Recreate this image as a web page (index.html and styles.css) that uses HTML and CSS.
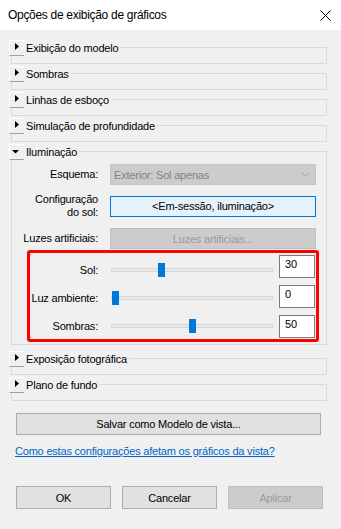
FILE: index.html
```html
<!DOCTYPE html>
<html lang="pt">
<head>
  <meta charset="UTF-8" />
  <title>Opções de exibição de gráficos</title>
  <link rel="stylesheet" href="styles.css">
</head>
<body>

  <div class="dialog">
    <div class="titlebar">
      <span>Opções de exibição de gráficos</span>
      <svg class="close" width="11" height="11" viewBox="0 0 11 11">
        <path d="M0.5 0.5 L10.5 10.5 M10.5 0.5 L0.5 10.5" stroke="#000" stroke-width="1" fill="none" />
      </svg>
    </div>

    <div class="content">
      <div class="group collapsed">
        <div class="group-head">
          <span class="toggle"><svg width="14" height="14"><polygon points="5,2 9,5.5 5,9" /></svg></span>
          <span>Exibição do modelo</span>
        </div>
      </div>

      <div class="group collapsed">
        <div class="group-head">
          <span class="toggle"><svg width="14" height="14"><polygon points="5,2 9,5.5 5,9" /></svg></span>
          <span>Sombras</span>
        </div>
      </div>

      <div class="group collapsed">
        <div class="group-head">
          <span class="toggle"><svg width="14" height="14"><polygon points="5,2 9,5.5 5,9" /></svg></span>
          <span>Linhas de esboço</span>
        </div>
      </div>

      <div class="group collapsed">
        <div class="group-head">
          <span class="toggle"><svg width="14" height="14"><polygon points="5,2 9,5.5 5,9" /></svg></span>
          <span>Simulação de profundidade</span>
        </div>
      </div>

      <div class="group open">
        <div class="group-head">
          <span class="toggle"><svg width="14" height="14"><polygon points="2,5 9,5 5.5,8.5" /></svg></span>
          <span>Iluminação</span>
        </div>

        <div class="row first">
          <label>Esquema:</label>
          <div class="select">
            <span>Exterior: Sol apenas</span>
            <svg width="9" height="5" viewBox="0 0 9 5"><path d="M0.5 0.5 L4.5 4.5 L8.5 0.5" stroke="#a6a6a6" fill="none" /></svg>
          </div>
        </div>

        <div class="row sun">
          <label>Configuração<br>do sol:</label>
          <button class="sun-btn">&lt;Em-sessão, iluminação&gt;</button>
        </div>

        <div class="row lights">
          <label>Luzes artificiais:</label>
          <button class="wide-btn" disabled>Luzes artificiais...</button>
        </div>

        <div class="highlight">
          <div class="sliders">
            <div class="slider-row">
              <label>Sol:</label>
              <input type="range" min="0" max="100" value="30">
            </div>
            <div class="slider-row">
              <label>Luz ambiente:</label>
              <input type="range" min="0" max="100" value="0">
            </div>
            <div class="slider-row">
              <label>Sombras:</label>
              <input type="range" min="0" max="100" value="50">
            </div>
          </div>
          <div class="values">
            <input class="num" type="text" value="30">
            <input class="num" type="text" value="0">
            <input class="num" type="text" value="50">
          </div>
        </div>
      </div>

      <div class="group collapsed">
        <div class="group-head">
          <span class="toggle"><svg width="14" height="14"><polygon points="5,2 9,5.5 5,9" /></svg></span>
          <span>Exposição fotográfica</span>
        </div>
      </div>

      <div class="group collapsed">
        <div class="group-head">
          <span class="toggle"><svg width="14" height="14"><polygon points="5,2 9,5.5 5,9" /></svg></span>
          <span>Plano de fundo</span>
        </div>
      </div>

      <button class="save-btn">Salvar como Modelo de vista...</button>

      <a class="help" href="#">Como estas configurações afetam os gráficos da vista?</a>

      <div class="actions">
        <button>OK</button>
        <button>Cancelar</button>
        <button disabled>Aplicar</button>
      </div>
    </div>
  </div>

</body>
</html>
```

FILE: styles.css
```css
* {
  box-sizing: border-box;
}

body {
  margin: 0;
  background: #f0f0f0;
  font-family: 'Segoe UI', 'Liberation Sans', sans-serif;
  font-size: 11px;
  letter-spacing: -0.2px;
  color: #000;
}

.dialog {
  width: 341px;
  height: 529px;
}

.titlebar {
  height: 30px;
  background: #ffffff;
  display: flex;
  align-items: center;
  justify-content: space-between;
  padding: 0 10px 0 8px;
  font-size: 12px;
  letter-spacing: -0.3px;
}

.content {
  padding-top: 17px;
}

/* collapsible group boxes */
.group {
  margin: 0 14px 9px 11px;
  border: 1px solid #dadada;
}

.group.collapsed {
  height: 17px;
}

.group.open {
  margin-bottom: 13px;
  padding-bottom: 2px;
}

.group-head {
  display: flex;
  align-items: center;
  width: max-content;
  height: 16px;
  margin: -8px 0 0 -3px;
  padding-right: 2px;
  background: #f0f0f0;
}

.toggle {
  display: flex;
  width: 15px;
  height: 16px;
  margin-right: 2px;
  border-top: 1px solid #ffffff;
  border-left: 1px solid #ffffff;
  border-bottom: 1px solid #a0a0a0;
}

.toggle svg {
  fill: #000;
}

/* lighting rows */
.row {
  display: flex;
  align-items: center;
}

.row label {
  width: 86px;
  margin-right: 12px;
  text-align: right;
  line-height: 13px;
  white-space: nowrap;
}

.row.first {
  margin-top: 4px;
}

.row.sun {
  margin-top: 8px;
  height: 26px;
}

.row.lights {
  margin-top: 9px;
}

.select {
  width: 206px;
  height: 21px;
  display: flex;
  align-items: center;
  justify-content: space-between;
  padding: 0 5px 0 3px;
  background: #cccccc;
  border: 1px solid #c4c4c4;
  color: #838383;
}

button {
  font-family: inherit;
  font-size: 11px;
  letter-spacing: inherit;
  color: #000;
  background: #e1e1e1;
  border: 1px solid #adadad;
  border-radius: 0;
  padding: 0;
}

button:disabled {
  background: #cccccc;
  border-color: #bfbfbf;
  color: #9b9b9b;
}

.sun-btn {
  width: 206px;
  height: 21px;
  background: #e5f1fb;
  border-color: #0078d7;
}

.wide-btn {
  width: 206px;
  height: 21px;
}

/* red highlighted slider block */
.highlight {
  display: flex;
  width: 292px;
  height: 92px;
  margin: 1px 0 0 15px;
  border: 3px solid #ff0000;
  border-radius: 3px;
}

.sliders {
  padding-top: 3px;
}

.slider-row {
  display: flex;
  align-items: center;
  height: 28px;
}

.slider-row label {
  width: 68px;
  margin-right: 13px;
  text-align: right;
  white-space: nowrap;
}

input[type="range"] {
  -webkit-appearance: none;
  appearance: none;
  width: 162px;
  height: 14px;
  margin: 0;
  background: transparent;
}

input[type="range"]::-webkit-slider-runnable-track {
  height: 4px;
  background: #e7e7e7;
  border: 1px solid #d6d6d6;
}

input[type="range"]::-webkit-slider-thumb {
  -webkit-appearance: none;
  width: 7px;
  height: 14px;
  margin-top: -6px;
  background: #0078d7;
  border: none;
}

.values {
  display: flex;
  flex-direction: column;
  gap: 7px;
  padding-top: 2px;
  margin-left: 6px;
}

.num {
  width: 36px;
  height: 23px;
  padding: 0 5px 5px;
  border: 1px solid #7a7a7a;
  background: #ffffff;
  font-family: inherit;
  font-size: 11px;
  letter-spacing: inherit;
  color: #000;
  outline: none;
}

/* bottom part */
.save-btn {
  display: block;
  width: 305px;
  height: 22px;
  margin: 12px 0 0 16px;
}

.help {
  display: block;
  width: max-content;
  margin: 8px 0 0 15px;
  line-height: 16px;
  color: #0066cc;
}

.actions {
  display: flex;
  gap: 11px;
  margin-top: 27px;
  padding-left: 16px;
}

.actions button {
  width: 95px;
  height: 23px;
}
```
